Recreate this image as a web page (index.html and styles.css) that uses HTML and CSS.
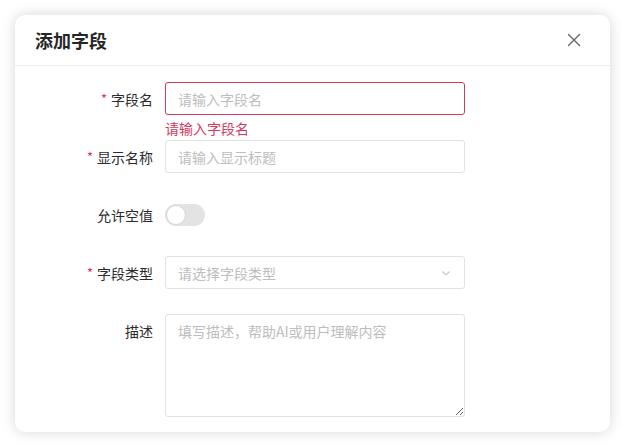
FILE: index.html
```html
<!DOCTYPE html>
<html lang="zh-CN">
<head>
<meta charset="utf-8">
<link rel="stylesheet" href="styles.css">
</head>
<body>
<div class="dialog">
  <div class="dialog-header">
    <span class="dialog-title">添加字段</span>
    <button class="close" aria-label="关闭">
      <svg width="14" height="14" viewBox="0 0 14 14"><path d="M1.5 1.5 L12.5 12.5 M12.5 1.5 L1.5 12.5" stroke="#666" stroke-width="1.4" fill="none" stroke-linecap="round"/></svg>
    </button>
  </div>
  <div class="dialog-body">
    <div class="form-item">
      <label class="label"><span class="req">*</span>字段名</label>
      <div class="control">
        <input class="input is-error" placeholder="请输入字段名">
        <div class="msg">请输入字段名</div>
      </div>
    </div>
    <div class="form-item">
      <label class="label"><span class="req">*</span>显示名称</label>
      <div class="control">
        <input class="input" placeholder="请输入显示标题">
        <div class="msg"></div>
      </div>
    </div>
    <div class="form-item">
      <label class="label">允许空值</label>
      <div class="control">
        <div class="switch-row"><span class="switch"><span class="knob"></span></span></div>
        <div class="msg"></div>
      </div>
    </div>
    <div class="form-item">
      <label class="label"><span class="req">*</span>字段类型</label>
      <div class="control">
        <div class="select">
          <span class="select-ph">请选择字段类型</span>
          <svg width="12" height="12" viewBox="0 0 12 12"><path d="M2.5 4.5 L6 8 L9.5 4.5" stroke="#c8c8c8" stroke-width="1.2" fill="none"/></svg>
        </div>
        <div class="msg"></div>
      </div>
    </div>
    <div class="form-item last">
      <label class="label label-top">描述</label>
      <div class="control">
        <textarea class="textarea" placeholder="填写描述，帮助AI或用户理解内容"></textarea>
      </div>
    </div>
  </div>
</div>
</body>
</html>
```

FILE: styles.css
```css
* { box-sizing: border-box; }
html, body { margin: 0; padding: 0; }
body {
  background: #ffffff;
  font-family: "Noto Sans CJK SC", "Noto Sans", "Liberation Sans", sans-serif;
  padding: 15px 15px 0 15px;
  width: 625px;
  height: 447px;
  overflow: hidden;
}
.dialog {
  width: 595px;
  height: 417px;
  background: #fff;
  border-radius: 10px;
  box-shadow: 0 0 14px rgba(0, 0, 0, 0.16);
  display: flex;
  flex-direction: column;
}
.dialog-header {
  height: 51px;
  border-bottom: 1px solid #ececec;
  display: flex;
  align-items: center;
  justify-content: space-between;
  padding: 0 29px 0 20px;
}
.dialog-title {
  font-size: 18px;
  font-weight: 700;
  color: #262626;
  line-height: 24px;
}
.close {
  border: 0;
  background: none;
  padding: 0;
  width: 14px;
  height: 14px;
  display: flex;
  cursor: pointer;
}
.dialog-body {
  padding: 16px 0 0 0;
  display: flex;
  flex-direction: column;
}
.form-item {
  display: flex;
}
.label {
  width: 150px;
  padding-right: 12px;
  height: 33px;
  display: flex;
  align-items: center;
  justify-content: flex-end;
  font-size: 14px;
  color: #2b2b2b;
}
.req {
  color: #d6345a;
  margin-right: 4px;
  font-size: 13px;
}
.control {
  width: 300px;
  display: flex;
  flex-direction: column;
}
.input, .select, .textarea {
  width: 300px;
  height: 33px;
  border: 1px solid #e2e2e2;
  border-radius: 3px;
  background: #fff;
  font-family: inherit;
  font-size: 14px;
  padding: 0 12px;
  color: #333;
  outline: none;
}
.input::placeholder, .textarea::placeholder { color: #bdbdbd; }
.input.is-error { border-color: #d23a5c; }
.msg {
  height: 25px;
  padding-top: 3px;
  font-size: 14px;
  line-height: 20px;
  color: #d23a5c;
}
.switch-row {
  height: 33px;
  display: flex;
  align-items: center;
}
.switch {
  width: 40px;
  height: 22px;
  border-radius: 11px;
  background: #e3e3e3;
  display: flex;
  align-items: center;
  padding: 1px;
}
.knob {
  width: 20px;
  height: 20px;
  border-radius: 50%;
  background: #fff;
  border: 1px solid #d5d5d5;
}
.select {
  display: flex;
  align-items: center;
  justify-content: space-between;
  padding-right: 12px;
}
.select-ph { color: #bdbdbd; }
.textarea {
  height: 103px;
  padding: 6px 12px;
  line-height: 20px;
  resize: vertical;
  display: block;
}
```
